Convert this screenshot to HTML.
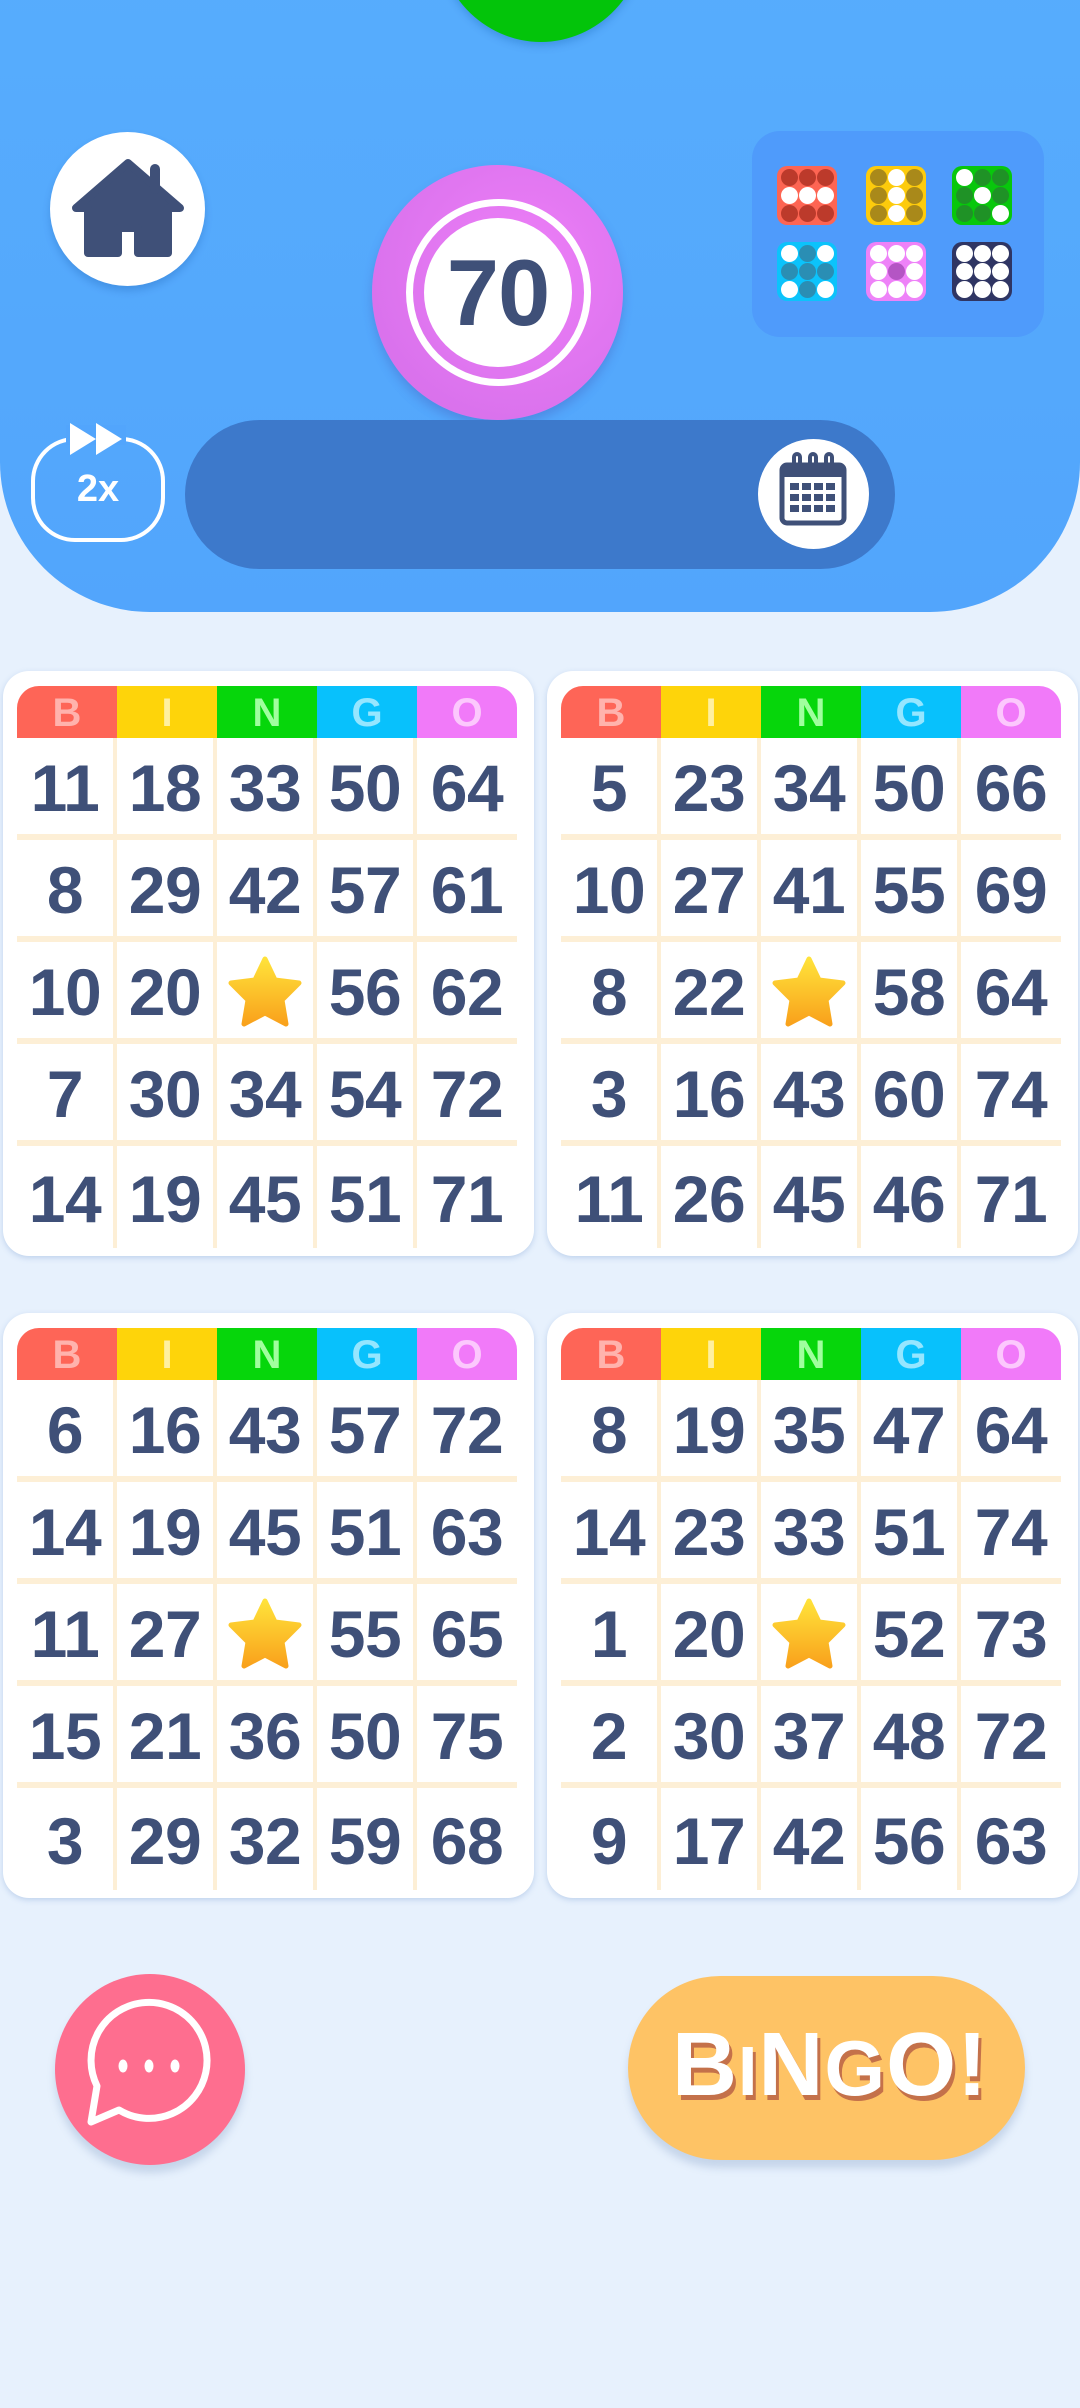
<!DOCTYPE html>
<html><head><meta charset="utf-8"><style>
*{margin:0;padding:0;box-sizing:border-box}
body{width:1080px;height:2408px;background:#e7f1fd;position:relative;overflow:hidden;font-family:"Liberation Sans",sans-serif}
.hdr{position:absolute;left:0;top:-50px;width:1080px;height:662px;background:linear-gradient(180deg,#57adfd,#52a5fc);border-radius:0 0 150px 150px}
.abs{position:absolute}
.card{position:absolute;width:531px;height:585px;background:#fff;border-radius:26px;box-shadow:0 2px 6px rgba(100,140,200,.3)}
.head{position:absolute;left:14px;top:15px;width:500px;height:52px;display:flex;border-radius:22px 22px 0 0;overflow:hidden}
.head div{flex:1;text-align:center;font-weight:bold;font-size:40px;line-height:54px}
.grid{position:absolute;left:14px;top:67px;width:500px;display:grid;grid-template-columns:repeat(5,100px);grid-auto-rows:102px}
.grid div{display:flex;align-items:center;justify-content:center;padding-top:4px;font-weight:bold;font-size:66px;color:#3f5078;letter-spacing:-0.5px;border-right:4px solid #fdefd6;border-bottom:6px solid #fdefd6}
.grid div:nth-child(5n){border-right:none}
.grid div:nth-child(n+21){border-bottom:none}
.pat{position:absolute;width:60px;height:59px;border-radius:10px;display:grid;grid-template-columns:repeat(3,17px);gap:1px;justify-content:center;align-content:center}
.pat i{width:17px;height:17px;border-radius:50%;display:block}
</style></head><body>
<div class="hdr"></div>
<div class="abs" style="left:436px;top:-180px;width:210px;height:222px;border-radius:50%;background:#03c40a;box-shadow:0 4px 8px rgba(0,80,160,.25)"></div>
<div class="abs" style="left:50px;top:132px;width:155px;height:154px;border-radius:50%;background:#fff;box-shadow:0 5px 8px rgba(0,60,140,.2)"></div>
<svg class="abs" style="left:0;top:0" width="260" height="300"><path d="M128 163 L180 208 L168 208 L168 253 L138 253 L138 228 L118 228 L118 253 L88 253 L88 208 L76 208 Z" fill="#3f5078" stroke="#3f5078" stroke-width="8" stroke-linejoin="round"/><rect x="150" y="164" width="10" height="30" rx="5" fill="#3f5078"/></svg>
<div class="abs" style="left:372px;top:165px;width:251px;height:255px;border-radius:50%;background:radial-gradient(circle at 60% 40%,#ee7ff8,#d26de8);box-shadow:0 6px 10px rgba(60,60,160,.25)"></div>
<div class="abs" style="left:406px;top:199px;width:185px;height:187px;border-radius:50%;border:7px solid #fff"></div>
<div class="abs" style="left:424px;top:218px;width:148px;height:149px;border-radius:50%;background:#fff;color:#3f5078;font-weight:bold;font-size:94px;line-height:149px;text-align:center;letter-spacing:-1px">70</div>
<div class="abs" style="left:752px;top:131px;width:292px;height:206px;border-radius:28px;background:#4f9bfb"></div>
<div class="pat" style="left:777px;top:166px;background:#fd6553"><i style="background:#bc3a2b"></i><i style="background:#bc3a2b"></i><i style="background:#bc3a2b"></i><i style="background:#fff"></i><i style="background:#fff"></i><i style="background:#fff"></i><i style="background:#bc3a2b"></i><i style="background:#bc3a2b"></i><i style="background:#bc3a2b"></i></div>
<div class="pat" style="left:866px;top:166px;background:#fdcb0c"><i style="background:#a9891a"></i><i style="background:#fff"></i><i style="background:#a9891a"></i><i style="background:#a9891a"></i><i style="background:#fff"></i><i style="background:#a9891a"></i><i style="background:#a9891a"></i><i style="background:#fff"></i><i style="background:#a9891a"></i></div>
<div class="pat" style="left:952px;top:166px;background:#08c70c"><i style="background:#fff"></i><i style="background:#1f9226"></i><i style="background:#1f9226"></i><i style="background:#1f9226"></i><i style="background:#fff"></i><i style="background:#1f9226"></i><i style="background:#1f9226"></i><i style="background:#1f9226"></i><i style="background:#fff"></i></div>
<div class="pat" style="left:777px;top:242px;background:#0cc3fb"><i style="background:#fff"></i><i style="background:#2a8eb4"></i><i style="background:#fff"></i><i style="background:#2a8eb4"></i><i style="background:#2a8eb4"></i><i style="background:#2a8eb4"></i><i style="background:#fff"></i><i style="background:#2a8eb4"></i><i style="background:#fff"></i></div>
<div class="pat" style="left:866px;top:242px;background:#ee82f8"><i style="background:#fff"></i><i style="background:#fff"></i><i style="background:#fff"></i><i style="background:#fff"></i><i style="background:#b455c4"></i><i style="background:#fff"></i><i style="background:#fff"></i><i style="background:#fff"></i><i style="background:#fff"></i></div>
<div class="pat" style="left:952px;top:242px;background:#2f3563"><i style="background:#fff"></i><i style="background:#fff"></i><i style="background:#fff"></i><i style="background:#fff"></i><i style="background:#fff"></i><i style="background:#fff"></i><i style="background:#fff"></i><i style="background:#fff"></i><i style="background:#fff"></i></div>
<div class="abs" style="left:31px;top:437px;width:134px;height:105px;border:4px solid #fff;border-radius:44px;color:#fff;font-size:38px;font-weight:bold;text-align:center;line-height:97px">2x</div>
<svg class="abs" style="left:60px;top:415px" width="80" height="50"><rect x="6" y="10" width="60" height="20" fill="#52a5fc"/><path d="M10 8 L10 40 L36 24 Z M36 8 L36 40 L62 24 Z" fill="#fff"/></svg>
<div class="abs" style="left:185px;top:420px;width:710px;height:149px;border-radius:75px;background:#3d79cb"></div>
<div class="abs" style="left:758px;top:439px;width:111px;height:110px;border-radius:50%;background:#fff"></div>
<svg class="abs" style="left:758px;top:439px" width="111" height="110"><rect x="24" y="26" width="62" height="58" rx="5" fill="#fff" stroke="#3f5078" stroke-width="5"/><rect x="24" y="26" width="62" height="12" fill="#3f5078"/><g fill="#3f5078"><rect x="32" y="44" width="9" height="7"/><rect x="44" y="44" width="9" height="7"/><rect x="56" y="44" width="9" height="7"/><rect x="68" y="44" width="9" height="7"/><rect x="32" y="55" width="9" height="7"/><rect x="44" y="55" width="9" height="7"/><rect x="56" y="55" width="9" height="7"/><rect x="68" y="55" width="9" height="7"/><rect x="32" y="66" width="9" height="7"/><rect x="44" y="66" width="9" height="7"/><rect x="56" y="66" width="9" height="7"/><rect x="68" y="66" width="9" height="7"/></g><g fill="none" stroke="#3f5078" stroke-width="4"><path d="M36 32 V18 a3 3 0 0 1 6 0 V30"/><path d="M52 32 V18 a3 3 0 0 1 6 0 V30"/><path d="M68 32 V18 a3 3 0 0 1 6 0 V30"/></g></svg>

<svg width="0" height="0" style="position:absolute"><defs><linearGradient id="s" x1="0" y1="0" x2="0" y2="1"><stop offset="0" stop-color="#ffe23a"/><stop offset="1" stop-color="#f9a21c"/></linearGradient></defs></svg>

<div class="card" style="left:3px;top:671px">
<div class="head"><div style="background:#fe6557;color:#ffb3ad">B</div><div style="background:#fed40a;color:#fff0a0">I</div><div style="background:#06d60b;color:#a0ff9e">N</div><div style="background:#08c1fc;color:#95e6ff">G</div><div style="background:#f17af9;color:#fcc8fd">O</div></div>
<div class="grid"><div>11</div><div>18</div><div>33</div><div>50</div><div>64</div><div>8</div><div>29</div><div>42</div><div>57</div><div>61</div><div>10</div><div>20</div><div><svg width="76" height="72" viewBox="0 0 76 72"><path d="M38 3 L48 24 L72 27 L55 44 L59 68 L38 57 L17 68 L21 44 L4 27 L28 24 Z" fill="url(#s)" stroke="url(#s)" stroke-width="5" stroke-linejoin="round"/></svg></div><div>56</div><div>62</div><div>7</div><div>30</div><div>34</div><div>54</div><div>72</div><div>14</div><div>19</div><div>45</div><div>51</div><div>71</div></div>
</div>
<div class="card" style="left:547px;top:671px">
<div class="head"><div style="background:#fe6557;color:#ffb3ad">B</div><div style="background:#fed40a;color:#fff0a0">I</div><div style="background:#06d60b;color:#a0ff9e">N</div><div style="background:#08c1fc;color:#95e6ff">G</div><div style="background:#f17af9;color:#fcc8fd">O</div></div>
<div class="grid"><div>5</div><div>23</div><div>34</div><div>50</div><div>66</div><div>10</div><div>27</div><div>41</div><div>55</div><div>69</div><div>8</div><div>22</div><div><svg width="76" height="72" viewBox="0 0 76 72"><path d="M38 3 L48 24 L72 27 L55 44 L59 68 L38 57 L17 68 L21 44 L4 27 L28 24 Z" fill="url(#s)" stroke="url(#s)" stroke-width="5" stroke-linejoin="round"/></svg></div><div>58</div><div>64</div><div>3</div><div>16</div><div>43</div><div>60</div><div>74</div><div>11</div><div>26</div><div>45</div><div>46</div><div>71</div></div>
</div>
<div class="card" style="left:3px;top:1313px">
<div class="head"><div style="background:#fe6557;color:#ffb3ad">B</div><div style="background:#fed40a;color:#fff0a0">I</div><div style="background:#06d60b;color:#a0ff9e">N</div><div style="background:#08c1fc;color:#95e6ff">G</div><div style="background:#f17af9;color:#fcc8fd">O</div></div>
<div class="grid"><div>6</div><div>16</div><div>43</div><div>57</div><div>72</div><div>14</div><div>19</div><div>45</div><div>51</div><div>63</div><div>11</div><div>27</div><div><svg width="76" height="72" viewBox="0 0 76 72"><path d="M38 3 L48 24 L72 27 L55 44 L59 68 L38 57 L17 68 L21 44 L4 27 L28 24 Z" fill="url(#s)" stroke="url(#s)" stroke-width="5" stroke-linejoin="round"/></svg></div><div>55</div><div>65</div><div>15</div><div>21</div><div>36</div><div>50</div><div>75</div><div>3</div><div>29</div><div>32</div><div>59</div><div>68</div></div>
</div>
<div class="card" style="left:547px;top:1313px">
<div class="head"><div style="background:#fe6557;color:#ffb3ad">B</div><div style="background:#fed40a;color:#fff0a0">I</div><div style="background:#06d60b;color:#a0ff9e">N</div><div style="background:#08c1fc;color:#95e6ff">G</div><div style="background:#f17af9;color:#fcc8fd">O</div></div>
<div class="grid"><div>8</div><div>19</div><div>35</div><div>47</div><div>64</div><div>14</div><div>23</div><div>33</div><div>51</div><div>74</div><div>1</div><div>20</div><div><svg width="76" height="72" viewBox="0 0 76 72"><path d="M38 3 L48 24 L72 27 L55 44 L59 68 L38 57 L17 68 L21 44 L4 27 L28 24 Z" fill="url(#s)" stroke="url(#s)" stroke-width="5" stroke-linejoin="round"/></svg></div><div>52</div><div>73</div><div>2</div><div>30</div><div>37</div><div>48</div><div>72</div><div>9</div><div>17</div><div>42</div><div>56</div><div>63</div></div>
</div>

<div class="abs" style="left:55px;top:1974px;width:190px;height:191px;border-radius:50%;background:#fe6e8f;box-shadow:0 8px 8px rgba(100,130,180,.25)"></div>
<svg class="abs" style="left:55px;top:1974px" width="190" height="191"><path d="M42 112 L36 148 L64 136 A58 58 0 1 0 42 112 Z" fill="none" stroke="#fff" stroke-width="7" stroke-linejoin="round"/><g fill="#fff"><ellipse cx="68" cy="92" rx="4.5" ry="6.5"/><ellipse cx="94" cy="92" rx="4.5" ry="6.5"/><ellipse cx="120" cy="92" rx="4.5" ry="6.5"/></g></svg>
<div class="abs" style="left:628px;top:1976px;width:397px;height:184px;border-radius:92px;background:#fec365;box-shadow:0 8px 8px rgba(100,130,180,.25)"></div>
<div class="abs" style="left:650px;top:2010px;width:360px;text-align:center;font-weight:bold;font-size:90px;color:#fff;text-shadow:3px 5px 0 #c4714a;letter-spacing:1px;line-height:110px">B<span style="font-size:70px">I</span>N<span style="font-size:78px">G</span>O!</div>
</body></html>
